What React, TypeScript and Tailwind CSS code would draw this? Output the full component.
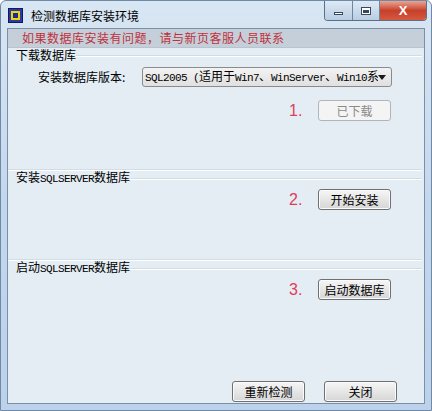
import React from 'react';

const cjk = '"Noto Sans CJK SC", "Liberation Sans", sans-serif';

const Latin: React.FC<{ children: React.ReactNode }> = ({ children }) => (
  <span className="text-[11px] tracking-[-0.6px]" style={{ fontFamily: '"Liberation Mono", monospace' }}>
    {children}
  </span>
);

const WinButton: React.FC<{ label: string; disabled?: boolean; className?: string }> = ({
  label,
  disabled,
  className = '',
}) => (
  <div
    className={`h-[21px] w-[73px] flex items-center justify-center rounded-[3px] border text-[12px] ${
      disabled
        ? 'border-[#b1b5b9] bg-[#f4f4f4] text-[#8a8a8a]'
        : 'border-[#707070] bg-gradient-to-b from-[#f6f6f6] via-[#e6e6e6] to-[#d6d6d6] text-black shadow-[inset_0_0_0_1px_#fbfbfb]'
    } ${className}`}
  >
    {label}
  </div>
);

const StepRow: React.FC<{ num: string; label: string; disabled?: boolean }> = ({ num, label, disabled }) => (
  <div className="flex items-center justify-end pr-[33px]">
    <span className="w-[29px] text-[16px] leading-none text-[#e33c5a]" style={{ fontFamily: '"Liberation Sans", sans-serif' }}>
      {num}
    </span>
    <WinButton label={label} disabled={disabled} />
  </div>
);

const GroupHeader: React.FC<{ children: React.ReactNode }> = ({ children }) => (
  <div className="flex items-center h-[14px] pl-[8px]">
    <span className="text-[12px] leading-[14px] text-black whitespace-nowrap">{children}</span>
    <div className="flex-1 mr-[2px] mt-[2px] flex flex-col">
      <div className="h-px bg-[#d2dce3]" />
      <div className="h-px bg-white" />
    </div>
  </div>
);

const Etch = () => (
  <div className="mr-[2px] flex flex-col">
    <div className="h-px bg-[#d2dce3]" />
    <div className="h-px bg-white" />
  </div>
);

export default function App() {
  return (
    <div
      className="w-[432px] h-[411px] flex flex-col bg-gradient-to-b from-[#d9e6f3] via-[#c3d7ec] to-[#bcd2ea] border border-[#6f8aa8] rounded-t-[6px] overflow-hidden"
      style={{ fontFamily: cjk }}
    >
      {/* title bar */}
      <div className="h-[27px] flex items-start justify-between">
        <div className="flex items-center gap-[8px] pl-[7px] pt-[7px]">
          <svg width="15" height="15" viewBox="0 0 15 15">
            <rect x="0.5" y="0.5" width="14" height="14" fill="#2a3aa8" stroke="#101a60" />
            <rect x="3" y="3" width="9" height="9" fill="#f4d400" />
            <rect x="5" y="5" width="5" height="5" fill="#1c2c9c" />
          </svg>
          <span className="text-[12px] leading-[14px] text-black">检测数据库安装环境</span>
        </div>
        <div className="flex mr-[4px] h-[20px] rounded-b-[4px] border border-t-0 border-[#5a6f88] overflow-hidden">
          <div className="w-[28px] flex items-center justify-center bg-gradient-to-b from-[#dfe9f5] to-[#b8cde3] border-r border-[#6f86a0]">
            <div className="w-[9px] h-[3px] bg-white border border-[#37475c] mt-[5px]" />
          </div>
          <div className="w-[27px] flex items-center justify-center bg-gradient-to-b from-[#dfe9f5] to-[#b8cde3] border-r border-[#6f86a0]">
            <div className="w-[10px] h-[8px] border border-[#37475c] bg-white flex items-center justify-center">
              <div className="w-[6px] h-[3px] bg-[#37475c] mt-[1px]" />
            </div>
          </div>
          <div className="w-[46px] flex items-center justify-center bg-gradient-to-b from-[#e8a493] via-[#c7402a] to-[#d5583d]">
            <span className="text-white text-[13px] font-bold leading-none" style={{ fontFamily: '"Liberation Sans", sans-serif' }}>
              X
            </span>
          </div>
        </div>
      </div>

      {/* client area */}
      <div className="flex-1 mx-[6px] mb-[6px] border border-[#7b90a8] bg-[#e3edf3] flex flex-col">
        <div className="h-[19px] bg-[#c4cfd9] border-b border-[#b8c3cd] flex items-center pl-[14px]">
          <span className="text-[12px] text-[#c0313c] tracking-[0.5px] leading-none">
            如果数据库安装有问题，请与新页客服人员联系
          </span>
        </div>

        {/* section 1 */}
        <div className="h-[121px] flex flex-col">
          <GroupHeader>下载数据库</GroupHeader>
          <div className="flex items-center mt-[5px] h-[20px]">
            <span className="w-[104px] ml-[30px] text-[12px] text-black">安装数据库版本:</span>
            <div className="w-[250px] h-[20px] rounded-[3px] border border-[#8b8b8b] bg-gradient-to-b from-[#f3f3f3] to-[#e0e0e0] flex items-center pl-[2px] pr-[5px]">
              <span className="flex-1 text-[12px] text-black whitespace-nowrap overflow-hidden">
                <Latin>SQL2005 (</Latin>适用于<Latin>Win7</Latin>、<Latin>WinServer</Latin>、<Latin>Win10</Latin>系
              </span>
              <svg width="8" height="5" viewBox="0 0 8 5">
                <path d="M0 0 H8 L4 5 Z" fill="#1a1a1a" />
              </svg>
            </div>
          </div>
          <div className="mt-[13px]">
            <StepRow num="1." label="已下载" disabled />
          </div>
        </div>

        {/* section 2 */}
        <Etch />
        <div className="h-[88px] flex flex-col">
          <GroupHeader>
            安装<Latin>SQLSERVER</Latin>数据库
          </GroupHeader>
          <div className="mt-[4px]">
            <StepRow num="2." label="开始安装" />
          </div>
        </div>

        {/* section 3 */}
        <Etch />
        <div className="flex-1 flex flex-col">
          <GroupHeader>
            启动<Latin>SQLSERVER</Latin>数据库
          </GroupHeader>
          <div className="mt-[4px]">
            <StepRow num="3." label="启动数据库" />
          </div>
          <div className="flex-1" />
          <div className="flex justify-end gap-[19px] pr-[27px] pb-[1px]">
            <WinButton label="重新检测" />
            <WinButton label="关闭" />
          </div>
        </div>
      </div>
    </div>
  );
}
